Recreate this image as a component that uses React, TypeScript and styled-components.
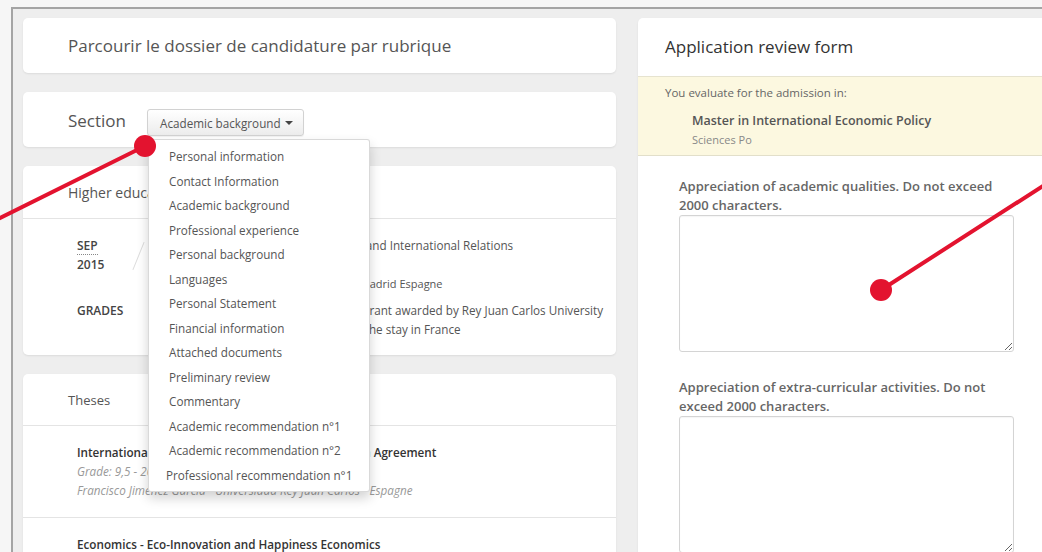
import styled, { createGlobalStyle } from "styled-components";

const GlobalStyle = createGlobalStyle`
  html, body {
    margin: 0;
    padding: 0;
    background: #f6f6f6;
    overflow: hidden;
  }
  body {
    font-family: "Open Sans", "Liberation Sans", sans-serif;
    color: #555;
  }
  * {
    box-sizing: border-box;
  }
`;

const Page = styled.div`
  position: relative;
  width: 1042px;
  height: 552px;
  padding: 7px 0 0 11px;
  overflow: hidden;
`;

const Frame = styled.div`
  display: flex;
  align-items: flex-start;
  gap: 22px;
  width: 1100px;
  height: 600px;
  padding: 9px 0 0 10px;
  background: #eeeeee;
  border-top: 2px solid #a4a4a4;
  border-left: 2px solid #a4a4a4;
`;

const Column = styled.div<{ $width: number }>`
  display: flex;
  flex-direction: column;
  gap: 19px;
  width: ${({ $width }) => $width}px;
  flex-shrink: 0;
`;

const Card = styled.div`
  background: #fff;
  border-radius: 5px;
  box-shadow: 0 1px 2px rgba(0, 0, 0, 0.08);
`;

const BarCard = styled(Card)<{ $offset?: number }>`
  display: flex;
  align-items: center;
  gap: 21px;
  height: 55px;
  padding: ${({ $offset }) => $offset ?? 0}px 45px 0;
`;

const PageTitle = styled.h1`
  margin: 0;
  font-size: 17px;
  font-weight: 400;
  color: #555;
`;

const SectionLabel = styled.span`
  font-size: 17px;
  color: #555;
`;

const Dropdown = styled.div`
  position: relative;
  margin-top: 4px;
`;

const ToggleButton = styled.button`
  display: flex;
  align-items: center;
  gap: 4px;
  height: 27px;
  padding: 0 10px 0 12px;
  font-family: inherit;
  font-size: 11.7px;
  color: #555;
  background: linear-gradient(#ffffff, #ececec);
  border: 1px solid #d2d2d2;
  border-radius: 3px;
  box-shadow: 0 1px 1px rgba(0, 0, 0, 0.06);
`;

const Caret = styled.span`
  width: 0;
  height: 0;
  border-top: 4px solid #444;
  border-left: 4px solid transparent;
  border-right: 4px solid transparent;
`;

const Menu = styled.ul`
  position: absolute;
  top: calc(100% + 3px);
  left: 1px;
  z-index: 10;
  width: 222px;
  margin: 0;
  padding: 4px 0;
  list-style: none;
  background: #fff;
  border: 1px solid rgba(0, 0, 0, 0.15);
  border-radius: 3px;
  box-shadow: 0 6px 12px rgba(0, 0, 0, 0.18);
`;

const MenuItem = styled.li<{ $shift?: number }>`
  padding: 0 20px;
  margin-left: ${({ $shift }) => $shift ?? 0}px;
  font-size: 11.7px;
  line-height: 24.5px;
  color: #555;
  white-space: nowrap;
`;

const CardHeader = styled.div<{ $height: number; $size: number }>`
  display: flex;
  align-items: center;
  height: ${({ $height }) => $height}px;
  padding: 0 45px;
  font-size: ${({ $size }) => $size}px;
  color: #555;
  border-bottom: 1px solid #e4e4e4;
`;

const EduBody = styled.div`
  display: flex;
  flex-direction: column;
  gap: 8px;
  padding: 17px 12px 16px 54px;
`;

const EduRow = styled.div`
  display: grid;
  grid-template-columns: 53px 32px 1fr;
  font-size: 12px;
  line-height: 19px;
`;

const DateCell = styled.div`
  font-weight: 600;
  color: #444;

  abbr {
    text-decoration: none;
    border-bottom: 1px dotted #888;
  }
`;

const Slash = styled.span`
  display: block;
  width: 1px;
  height: 30px;
  margin: 5px 0 0 8px;
  background: #ddd;
  transform: rotate(22deg);
`;

const EduText = styled.div<{ $size?: number }>`
  font-size: ${({ $size }) => $size ?? 11.7}px;
  color: #555;
`;

const ThesisItem = styled.div`
  padding: 17px 20px 17px 54px;
  font-size: 11.7px;
  line-height: 19px;

  & + & {
    border-top: 1px solid #e4e4e4;
  }
`;

const ThesisTitle = styled.div`
  font-weight: 600;
  color: #333;
`;

const ThesisMeta = styled.div`
  font-style: italic;
  color: #999;
`;

const FormCard = styled(Card)`
  min-height: 560px;
  border-radius: 5px 0 0 5px;
`;

const FormHeader = styled.div`
  display: flex;
  align-items: center;
  height: 58px;
  padding: 0 27px 2px;
  font-size: 17px;
  color: #333;
`;

const Notice = styled.div`
  padding: 7px 27px 7px;
  background: #fcf8e0;
  border-top: 1px solid #e6e3cf;
  border-bottom: 1px solid #e2dfca;
`;

const NoticeLead = styled.div`
  font-size: 11.5px;
  line-height: 18px;
  color: #666;
`;

const Program = styled.div`
  margin: 9px 0 0 27px;
`;

const ProgramName = styled.div`
  font-size: 12.5px;
  font-weight: 600;
  line-height: 19px;
  color: #555;
`;

const ProgramSchool = styled.div`
  margin-top: 1px;
  font-size: 11px;
  line-height: 17px;
  color: #888;
`;

const FormBody = styled.div`
  display: flex;
  flex-direction: column;
  gap: 26px;
  padding: 21px 41px;
`;

const Field = styled.label`
  display: flex;
  flex-direction: column;
`;

const FieldLabel = styled.span`
  font-size: 13px;
  font-weight: 600;
  line-height: 19px;
  color: #666;
`;

const TextArea = styled.textarea`
  height: 137px;
  width: 100%;
  margin-top: 0;
  border: 1px solid #d4d4d4;
  border-radius: 3px;
  box-shadow: inset 0 1px 1px rgba(0, 0, 0, 0.04);
  font-family: inherit;
`;

const Markers = styled.svg`
  position: absolute;
  top: 0;
  left: 0;
  z-index: 20;
  pointer-events: none;
`;

const sections = [
  "Personal information",
  "Contact Information",
  "Academic background",
  "Professional experience",
  "Personal background",
  "Languages",
  "Personal Statement",
  "Financial information",
  "Attached documents",
  "Preliminary review",
  "Commentary",
  "Academic recommendation n°1",
  "Academic recommendation n°2",
  "Professional recommendation n°1",
];

const theses = [
  {
    title: "International Trade - The EU-MERCOSUR Association Agreement",
    grade: "Grade: 9,5 - 2015",
    author: "Francisco Jiménez García - Universidad Rey Juan Carlos - Espagne",
  },
  {
    title: "Economics - Eco-Innovation and Happiness Economics",
    grade: "Grade: 9 - 2014",
    author: "Francisco Jiménez García - Universidad Rey Juan Carlos - Espagne",
  },
];

export default function App() {
  return (
    <Page>
      <GlobalStyle />
      <Frame>
        <Column $width={593}>
          <BarCard>
            <PageTitle>Parcourir le dossier de candidature par rubrique</PageTitle>
          </BarCard>

          <BarCard $offset={2}>
            <SectionLabel>Section</SectionLabel>
            <Dropdown>
              <ToggleButton>
                Academic background
                <Caret />
              </ToggleButton>
              <Menu>
                {sections.map((s, i) => (
                  <MenuItem key={s} $shift={i === sections.length - 1 ? -3 : 0}>
                    {s}
                  </MenuItem>
                ))}
              </Menu>
            </Dropdown>
          </BarCard>

          <Card>
            <CardHeader $height={53} $size={14}>
              Higher education
            </CardHeader>
            <EduBody>
              <EduRow>
                <DateCell>
                  <abbr title="September">SEP</abbr>
                  <div>2015</div>
                </DateCell>
                <Slash />
                <div>
                  <EduText>
                    Bachelor's Degree in Political Science and International Relations
                  </EduText>
                  <EduText $size={11}>Grado</EduText>
                  <EduText $size={11}>Universidad Rey Juan Carlos, Vicálvaro Madrid Espagne</EduText>
                </div>
              </EduRow>
              <EduRow>
                <DateCell>GRADES</DateCell>
                <span />
                <EduText>
                  Average 9,25/10 - Erasmus+ mobility grant awarded by Rey Juan Carlos University
                  <br />
                  with a full monthly stipends covering the stay in France
                </EduText>
              </EduRow>
            </EduBody>
          </Card>

          <Card>
            <CardHeader $height={52} $size={13}>
              Theses
            </CardHeader>
            {theses.map((t) => (
              <ThesisItem key={t.title}>
                <ThesisTitle>{t.title}</ThesisTitle>
                <ThesisMeta>{t.grade}</ThesisMeta>
                <ThesisMeta>{t.author}</ThesisMeta>
              </ThesisItem>
            ))}
          </Card>
        </Column>

        <Column $width={417}>
          <FormCard>
            <FormHeader>Application review form</FormHeader>
            <Notice>
              <NoticeLead>You evaluate for the admission in:</NoticeLead>
              <Program>
                <ProgramName>Master in International Economic Policy</ProgramName>
                <ProgramSchool>Sciences Po</ProgramSchool>
              </Program>
            </Notice>
            <FormBody>
              <Field>
                <FieldLabel>
                  Appreciation of academic qualities. Do not exceed 2000 characters.
                </FieldLabel>
                <TextArea />
              </Field>
              <Field>
                <FieldLabel>
                  Appreciation of extra-curricular activities. Do not exceed 2000
                  characters.
                </FieldLabel>
                <TextArea />
              </Field>
            </FormBody>
          </FormCard>
        </Column>
      </Frame>

      {/* callout pointers */}
      <Markers width={1042} height={552} viewBox="0 0 1042 552">
        <g stroke="#e3132f" strokeWidth={4} strokeLinecap="round" fill="#e3132f">
          <line x1={145} y1={146} x2={-4} y2={220} />
          <circle cx={145} cy={146} r={11} stroke="none" />
          <line x1={881} y1={290} x2={1046} y2={184} />
          <circle cx={881} cy={290} r={11} stroke="none" />
        </g>
      </Markers>
    </Page>
  );
}
